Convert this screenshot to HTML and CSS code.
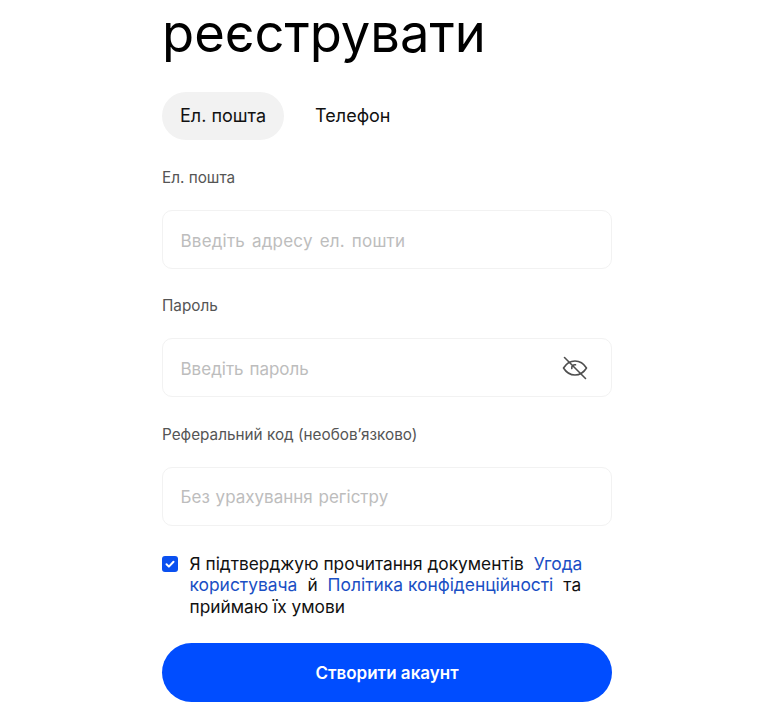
FILE: index.html
```html
<!DOCTYPE html>
<html lang="uk">
<head>
    <meta charset="UTF-8">
    <meta name="viewport" content="width=device-width, initial-scale=1.0">
    <title>Створити акаунт</title>
    <link rel="stylesheet" href="styles.css">
</head>
<body>
    <main class="signup">
        <h1 class="signup-title">реєструвати</h1>

        <!-- Tabs -->
        <div class="tabs">
            <button class="tab active" type="button">Ел. пошта</button>
            <button class="tab" type="button">Телефон</button>
        </div>

        <form class="form">
            <div class="field">
                <label class="field-label" for="email">Ел. пошта</label>
                <div class="input-box">
                    <input class="input input-wide" id="email" type="text" placeholder="Введіть адресу ел. пошти">
                </div>
            </div>

            <div class="field">
                <label class="field-label" for="password">Пароль</label>
                <div class="input-box">
                    <input class="input" id="password" type="password" placeholder="Введіть пароль">
                    <svg class="eye-icon" viewBox="0 0 26 26" fill="none" stroke="#4f4f4f" stroke-width="1.600" stroke-linecap="round" stroke-linejoin="round">
                        <path d="M1.500 13c3-4.800 6.800-7 11.500-7s8.500 2.200 11.500 7c-3 4.800-6.800 7-11.500 7s-8.500-2.200-11.500-7z"/>
                        <path d="M9.800 13.500a3.200 3.200 0 0 1 3.700-3.700"/>
                        <path d="M2.500 2.500l21 21"/>
                    </svg>
                </div>
            </div>

            <div class="field">
                <label class="field-label" for="referral">Реферальний код (необов’язково)</label>
                <div class="input-box">
                    <input class="input" id="referral" type="text" placeholder="Без урахування регістру">
                </div>
            </div>

            <div class="agree">
                <span class="checkbox">
                    <svg viewBox="0 0 16 16" fill="none" stroke="#fff" stroke-width="2" stroke-linecap="round" stroke-linejoin="round">
                        <path d="M4.500 8.300l2.400 2.300 4.600-4.900"/>
                    </svg>
                </span>
                <p class="agree-text">Я підтверджую прочитання документів<a href="#">Угода користувача</a>й<a href="#">Політика конфіденційності</a>та приймаю їх умови</p>
            </div>

            <button class="submit-btn" type="button">Створити акаунт</button>
        </form>
    </main>
</body>
</html>
```

FILE: styles.css
```css
/* General Page Style */
body {
    margin: 0;
    height: 711px;
    overflow: hidden;
    background-color: #fff;
    font-family: Inter, "Noto Sans", sans-serif;
    color: #111;
}

.signup {
    width: 450px;
    margin-left: 162px;
}

.signup-title {
    margin: -2px 0 0;
    font-size: 52.500px;
    font-weight: 400;
    line-height: 70px;
    color: #000;
}

/* Tabs */
.tabs {
    display: flex;
    gap: 13px;
    margin-top: 24px;
}

.tab {
    height: 48px;
    padding: 0 18px 2px;
    border: none;
    border-radius: 24px;
    background: none;
    font-family: inherit;
    font-size: 18px;
    color: #111;
}

.tab.active {
    background-color: #f2f2f2;
}

/* Form */
.form {
    margin-top: 28px;
}

.field {
    margin-bottom: 27.300px;
}

.field-label {
    display: block;
    height: 20px;
    margin-bottom: 22px;
    font-size: 15.300px;
    line-height: 20px;
    color: #555;
}

.input-box {
    display: flex;
    align-items: center;
    height: 57px;
    padding: 0 23px 0 17.500px;
    border: 1px solid #f2f2f2;
    border-radius: 10px;
}

.input {
    flex: 1;
    min-width: 0;
    border: none;
    outline: none;
    padding: 2px 0 0;
    font-family: inherit;
    font-size: 17px;
    word-spacing: 1px;
}

.input-wide {
    letter-spacing: 0.200px;
    word-spacing: 2px;
}

.input::placeholder {
    color: #bdbdbd;
}

.eye-icon {
    width: 26px;
    height: 26px;
}

/* Terms */
.agree {
    display: flex;
    gap: 11.500px;
}

.checkbox {
    flex: none;
    width: 16px;
    height: 16px;
    margin-top: 3px;
    border-radius: 3px;
    background-color: #0a50f0;
}

.checkbox svg {
    display: block;
}

.agree-text {
    margin: 0;
    font-size: 17.300px;
    line-height: 21.500px;
    color: #111;
}

.agree-text a {
    margin: 0 10px;
    font-size: 17.400px;
    color: #1a4fc4;
    text-decoration: none;
}

/* Submit */
.submit-btn {
    display: block;
    width: 100%;
    height: 59px;
    margin-top: 26px;
    border: none;
    border-radius: 30px;
    background-color: #004dff;
    font-family: inherit;
    font-size: 17px;
    font-weight: 600;
    color: #fff;
}
```
